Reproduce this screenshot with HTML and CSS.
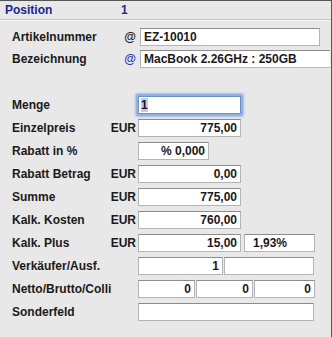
FILE: index.html
```html
<!DOCTYPE html>
<html lang="de">
<head>
  <meta charset="UTF-8">
  <title>Position</title>
  <link rel="stylesheet" href="styles.css">
</head>
<body>
  <div class="panel">
    <div class="panel-head">
      <span class="head-label">Position</span>
      <span class="head-value">1</span>
    </div>

    <div class="rows">
      <div class="row">
        <span class="label">Artikelnummer</span>
        <span class="unit">@</span>
        <div class="field field-wide left">EZ-10010</div>
      </div>
      <div class="row">
        <span class="label">Bezeichnung</span>
        <span class="unit link">@</span>
        <div class="field field-full left">MacBook 2.26GHz : 250GB</div>
      </div>
    </div>

    <div class="rows rows-main">
      <div class="row">
        <span class="label">Menge</span>
        <span class="unit"></span>
        <div class="field field-num focus left"><span class="sel">1</span></div>
      </div>
      <div class="row">
        <span class="label">Einzelpreis</span>
        <span class="unit">EUR</span>
        <div class="field field-num">775,00</div>
      </div>
      <div class="row">
        <span class="label">Rabatt in %</span>
        <span class="unit"></span>
        <div class="field field-pct">% 0,000</div>
      </div>
      <div class="row">
        <span class="label">Rabatt Betrag</span>
        <span class="unit">EUR</span>
        <div class="field field-num">0,00</div>
      </div>
      <div class="row">
        <span class="label">Summe</span>
        <span class="unit">EUR</span>
        <div class="field field-num">775,00</div>
      </div>
      <div class="row">
        <span class="label">Kalk. Kosten</span>
        <span class="unit">EUR</span>
        <div class="field field-num">760,00</div>
      </div>
      <div class="row">
        <span class="label">Kalk. Plus</span>
        <span class="unit">EUR</span>
        <div class="field field-num">15,00</div>
        <div class="field field-pct left">1,93%</div>
      </div>
      <div class="row">
        <span class="label">Verkäufer/Ausf.</span>
        <span class="unit"></span>
        <div class="field field-seller">1</div>
        <div class="field field-rest"></div>
      </div>
      <div class="row">
        <span class="label">Netto/Brutto/Colli</span>
        <span class="unit"></span>
        <div class="field field-third">0</div>
        <div class="field field-third">0</div>
        <div class="field field-third3">0</div>
      </div>
      <div class="row">
        <span class="label">Sonderfeld</span>
        <span class="unit"></span>
        <div class="field field-long"></div>
      </div>
    </div>
  </div>
</body>
</html>
```

FILE: styles.css
```css
body {
  margin: 0;
  padding: 0;
  background-color: #e8e8e8;
  font-family: 'Liberation Sans', Arial, sans-serif;
  font-size: 12px;
  font-weight: bold;
  color: #1a1a1a;
}
.panel {
  width: 331px;
  height: 336px;
  border-top: 1px solid #555;
  border-right: 1px solid #555;
  overflow: hidden;
}
.panel-head {
  display: flex;
  align-items: center;
  height: 18px;
  padding-left: 5px;
  border-bottom: 1px solid #c4c4c4;
  box-shadow: 0 1px 0 #f4f4f4;
  color: #1c2590;
}
.head-label {
  width: 116px;
}
.rows {
  padding-top: 8px;
  padding-left: 12px;
}
.rows-main {
  padding-top: 24px;
}
.row {
  display: flex;
  align-items: center;
  height: 18px;
  margin-bottom: 4px;
}
.rows-main .row {
  margin-bottom: 5px;
}
.label {
  width: 96px;
  flex-shrink: 0;
}
.unit {
  width: 28px;
  flex-shrink: 0;
  text-align: right;
  padding-right: 2px;
}
.link {
  color: #2a3cb0;
}
.field {
  box-sizing: border-box;
  height: 18px;
  line-height: 16px;
  flex-shrink: 0;
  background-color: #fff;
  border: 1px solid #b4b4b4;
  border-top-color: #8c8c8c;
  padding: 0 3px;
  text-align: right;
  white-space: nowrap;
  margin-right: 1px;
}
.left {
  text-align: left;
}
.field-wide {
  width: 180px;
  margin-left: 2px;
  padding-left: 3px;
}
.field-full {
  width: 190px;
  margin-left: 2px;
  padding-left: 3px;
  border-right: none;
}
.field-num {
  width: 103px;
}
.field-pct {
  width: 71px;
}
.field-pct.left {
  margin-left: 2px;
  padding-left: 8px;
}
.field-seller {
  width: 85px;
}
.field-rest {
  width: 90px;
}
.field-third {
  width: 57px;
}
.field-third3 {
  width: 61px;
}
.field-long {
  width: 176px;
}
.focus {
  border-color: #6d8fc4;
  box-shadow: 0 0 0 2px #8db2e4, 0 0 2px 3px rgba(110, 150, 215, 0.5);
  border-radius: 1px;
  padding-left: 2px;
}
.sel {
  background-color: #b3d0f5;
  color: #3a0a10;
}
```
